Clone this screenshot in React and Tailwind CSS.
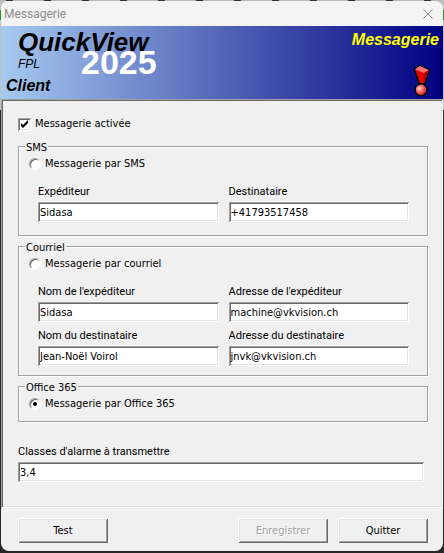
import React from "react";

const FONT = "font-['DejaVu_Sans_Condensed','DejaVu_Sans',sans-serif]";

function Field({ id, label, value, className = "" }) {
  return (
    <div className={`min-w-0 ${className}`}>
      <label
        htmlFor={id}
        className="block h-4 font-[Roboto,sans-serif] text-[11px] leading-4 whitespace-nowrap"
      >
        {label}
      </label>
      <input
        id={id}
        type="text"
        defaultValue={value}
        className="mt-0.5 block h-5 w-full bg-white px-0.5 text-[11px] leading-4 shadow-[inset_1px_1px_#a0a0a0,inset_-1px_-1px_#ffffff,inset_2px_2px_#696969,inset_-2px_-2px_#e3e3e3] outline-none"
      />
    </div>
  );
}

function Group({ title, className = "", children }) {
  return (
    <fieldset
      className={`mt-0.5 min-w-0 border border-[#a0a0a0] pr-[18px] pl-2.5 shadow-[inset_1px_1px_#ffffff,1px_1px_#ffffff] ${className}`}
    >
      <legend className="-ml-1 bg-[#f0f0f0] px-px pt-1 leading-3">{title}</legend>
      {children}
    </fieldset>
  );
}

function Mode({ id, label, checked }) {
  return (
    <div className="flex h-5 items-center gap-1">
      <span className="relative flex size-3">
        <input
          id={id}
          type="radio"
          name="mode"
          defaultChecked={checked}
          className="peer size-3 appearance-none rounded-full border border-t-[#a0a0a0] border-r-white border-b-white border-l-[#a0a0a0] bg-white shadow-[inset_1px_1px_#696969]"
        />
        <span className="pointer-events-none absolute top-1 left-1 hidden size-1 rounded-full bg-black peer-checked:block" />
      </span>
      <label htmlFor={id}>{label}</label>
    </div>
  );
}

function PushButton({ children, disabled }) {
  return (
    <button
      type="button"
      disabled={disabled}
      className="h-[25px] w-[90px] bg-[#f0f0f0] shadow-[inset_1px_1px_#ffffff,inset_-1px_-1px_#696969,inset_2px_2px_#e3e3e3,inset_-2px_-2px_#a0a0a0] disabled:text-[#a0a0a0] disabled:[text-shadow:1px_1px_#ffffff]"
    >
      {children}
    </button>
  );
}

function AlertMark() {
  return (
    <svg viewBox="0 0 18 33" className="h-[33px] w-[18px]" aria-hidden="true">
      <defs>
        <radialGradient id="ball" cx="0.38" cy="0.38" r="0.65">
          <stop offset="0" stopColor="#ffd0d0" />
          <stop offset="0.45" stopColor="#ff6c6c" />
          <stop offset="1" stopColor="#c81414" />
        </radialGradient>
      </defs>
      <path d="M1.5 5.5 6.5 1.5 16.5 6 11.5 20H6.5Z" fill="#e80000" stroke="#000" strokeWidth="1.4" />
      <path d="M2 5.5 6.5 2 16 6 11 9Z" fill="#ff7070" />
      <path d="M11 9 16 6 11 19.5 9.5 19.5Z" fill="#b00000" />
      <circle cx="8" cy="25.8" r="5.9" fill="url(#ball)" stroke="#000" strokeWidth="1.3" />
    </svg>
  );
}

function Banner() {
  return (
    <header className="flex h-[73px] justify-between bg-linear-to-r/srgb from-[#a6caf0] to-[#000080] font-['Liberation_Sans',sans-serif] font-bold">
      <div className="relative pl-[5px] text-black italic">
        <h1 className="pl-3 text-[26px] leading-8">QuickView</h1>
        <p className="pl-3 text-xs leading-3 font-normal">FPL</p>
        <p className="mt-2 text-base leading-4">Client</p>
        <span className="absolute top-5 left-20 text-[34px] leading-8 text-white not-italic">
          2025
        </span>
      </div>
      <div className="flex flex-col items-end justify-between pt-1.5 pr-1 pb-0.5">
        <h2 className="text-base leading-4 text-[#ffff00] italic">Messagerie</h2>
        <div className="pr-2">
          <AlertMark />
        </div>
      </div>
    </header>
  );
}

export default function App() {
  return (
    <div className="min-h-screen bg-[linear-gradient(#c0c0c0_10px,#10a010_10px,#10a010_20px,#c0c0c0_20px,#c0c0c0_110px,#262626_110px)]">
      <div className="h-px bg-[repeating-linear-gradient(90deg,#b8b8b8_0,#b8b8b8_6px,#303030_6px,#303030_13px,#b8b8b8_13px,#b8b8b8_38px)]" />
      <main
        className={`mx-px overflow-hidden rounded-lg bg-[#f0f0f0] text-[11px] leading-4 text-black ${FONT}`}
      >
        <div className="flex h-[25px] items-center justify-between bg-[#f3f3f3] pr-2.5 pl-[3px]">
          <span className="font-[Roboto,sans-serif] text-xs text-[#8c8c8c]">Messagerie</span>
          <button type="button" aria-label="Fermer">
            <svg viewBox="0 0 10 10" className="size-2.5" stroke="#8c8c8c" fill="none">
              <path d="M0.5 0.5 9.5 9.5M9.5 0.5 0.5 9.5" />
            </svg>
          </button>
        </div>
        <Banner />
        <section className="pt-[17px] pr-[15px] pb-[26px] pl-[17px] shadow-[inset_1px_1px_#a0a0a0,inset_-1px_-1px_#ffffff,inset_2px_2px_#696969,inset_-2px_-2px_#e3e3e3]">
          <div className="flex h-4 items-center gap-1">
            <span className="relative flex size-[13px]">
              <input
                id="active"
                type="checkbox"
                defaultChecked
                className="peer size-[13px] appearance-none bg-white shadow-[inset_1px_1px_#a0a0a0,inset_-1px_-1px_#ffffff,inset_2px_2px_#696969,inset_-2px_-2px_#e3e3e3]"
              />
              <svg
                viewBox="0 0 13 13"
                className="pointer-events-none absolute inset-0 hidden size-[13px] peer-checked:block"
              >
                <path d="M3 5v3l2 2 5-5V2L5 7Z" fill="#000" />
              </svg>
            </span>
            <label htmlFor="active">Messagerie activée</label>
          </div>
          <div className="pt-1">
            <Group title="SMS" className="pb-[13px]">
              <Mode id="sms" label="Messagerie par SMS" />
              <div className="mt-2.5 grid grid-cols-2 gap-x-2.5 pl-[9px]">
                <Field id="sms-from" label="Expéditeur" value="Sidasa" />
                <Field id="sms-to" label="Destinataire" value="+41793517458" />
              </div>
            </Group>
            <Group title="Courriel" className="pb-[9px]">
              <Mode id="mail" label="Messagerie par courriel" />
              <div className="mt-2.5 grid grid-cols-2 gap-x-2.5 gap-y-1.5 pl-[9px]">
                <Field id="from-name" label="Nom de l'expéditeur" value="Sidasa" />
                <Field id="from-mail" label="Adresse de l'expéditeur" value="machine@vkvision.ch" />
                <Field id="to-name" label="Nom du destinataire" value="Jean-Noël Voirol" />
                <Field id="to-mail" label="Adresse du destinataire" value="jnvk@vkvision.ch" />
              </div>
            </Group>
            <Group title="Office 365" className="pb-[7px]">
              <Mode id="office" label="Messagerie par Office 365" checked />
            </Group>
          </div>
          <Field
            id="classes"
            label="Classes d'alarme à transmettre"
            value="3,4"
            className="mt-[22px] mr-1"
          />
        </section>
        <footer className="flex gap-2.5 pt-2.5 pr-[15px] pb-2 pl-[17px]">
          <div className="grow">
            <PushButton>Test</PushButton>
          </div>
          <PushButton disabled>Enregistrer</PushButton>
          <PushButton>Quitter</PushButton>
        </footer>
      </main>
    </div>
  );
}
